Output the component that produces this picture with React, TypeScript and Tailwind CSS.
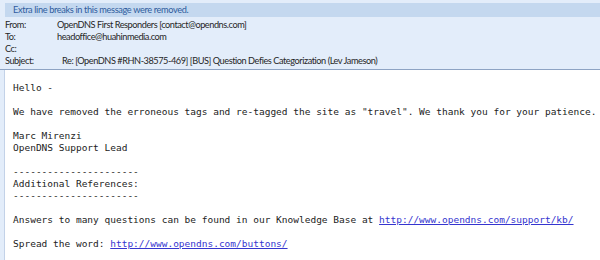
const mono = { fontFamily: '"DejaVu Sans Mono", "Liberation Mono", monospace' }

function HeaderRow({ label, value, indent }: { label: string; value?: string; indent?: boolean }) {
  return (
    <div className="flex h-[12px] items-center leading-[12px]">
      <span className="w-[52px] shrink-0">{label}</span>
      <span className={indent ? 'pl-[5px] whitespace-nowrap' : 'whitespace-nowrap'}>{value}</span>
    </div>
  )
}

export default function App() {
  const link = 'text-[#3535cf] underline'
  return (
    <div className="w-[600px] h-[260px] overflow-hidden bg-[#e3edfa] text-[#262626]">
      <div
        className="pt-[3px] text-[9.2px] tracking-[-0.35px]"
        style={{ fontFamily: 'Lato, "Liberation Sans", Arial, sans-serif' }}
      >
        <div className="ml-[5px] h-[14px] bg-[#c4d8ef] pl-[8px] leading-[14px] text-[#2f5c9e]">
          Extra line breaks in this message were removed.
        </div>
        <div className="pl-[5px] pt-[2px] tracking-[-0.45px]">
          <HeaderRow label="From:" value="OpenDNS First Responders [contact@opendns.com]" />
          <HeaderRow label="To:" value="headoffice@huahinmedia.com" />
          <HeaderRow label="Cc:" />
          <HeaderRow label="Subject:" value="Re: [OpenDNS #RHN-38575-469] [BUS] Question Defies Categorization (Lev Jameson)" indent />
        </div>
      </div>
      <div className="mt-[2px] border-t border-[#8da3c3] pl-[4px]">
        <div
          className="h-[200px] border-l border-[#c3d2e8] bg-white pl-[8px] pt-[12px] text-[9.5px] leading-[12px] text-[#222] whitespace-pre"
          style={mono}
        >
          <div>Hello -</div>
          <div>&nbsp;</div>
          <div>We have removed the erroneous tags and re-tagged the site as "travel". We thank you for your patience.</div>
          <div>&nbsp;</div>
          <div>Marc Mirenzi</div>
          <div>OpenDNS Support Lead</div>
          <div>&nbsp;</div>
          <div>----------------------</div>
          <div>Additional References:</div>
          <div>----------------------</div>
          <div>&nbsp;</div>
          <div>
            Answers to many questions can be found in our Knowledge Base at{' '}
            <span className={link}>http://www.opendns.com/support/kb/</span>
          </div>
          <div>&nbsp;</div>
          <div>
            Spread the word: <span className={link}>http://www.opendns.com/buttons/</span>
          </div>
        </div>
      </div>
    </div>
  )
}
